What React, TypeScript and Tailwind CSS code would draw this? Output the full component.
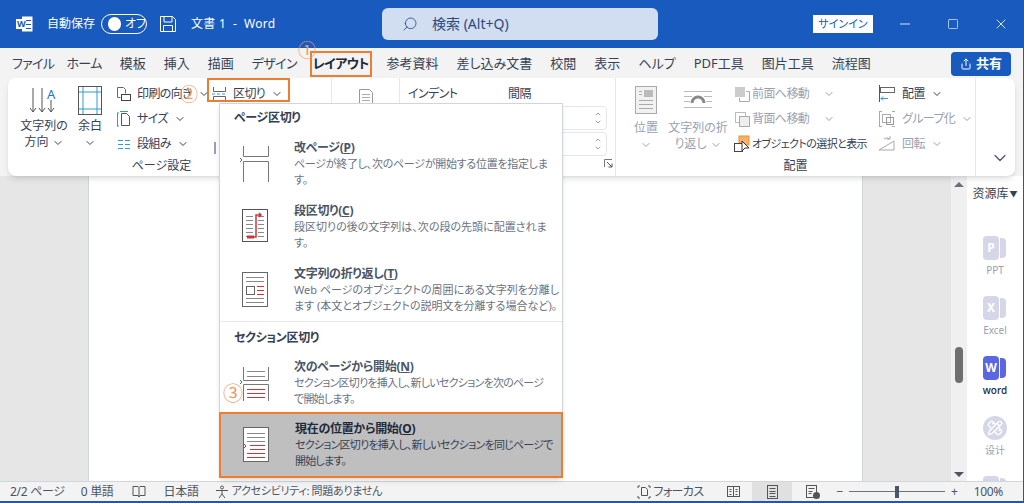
import type { ReactNode } from "react";
import { ChevronDown, Minus, PencilRuler, Search, Share, Square, X } from "lucide-react";

const tabs = [
  { label: "ファイル", cls: "tracking-tighter -mr-1.5" },
  { label: "ホーム", cls: "tracking-tighter" },
  { label: "模板", cls: "" },
  { label: "挿入", cls: "" },
  { label: "描画", cls: "" },
  { label: "デザイン", cls: "tracking-tighter" },
];
const tabsAfter = ["参考資料", "差し込み文書", "校閲", "表示", "ヘルプ", "PDF工具", "图片工具", "流程图"];

function Caret({ className = "" }: { className?: string }) {
  return <ChevronDown className={"inline-block size-3 " + className} strokeWidth={2} />;
}

function Icon({ w, h, children }: { w: number; h: number; children: ReactNode }) {
  return (
    <svg width={w} height={h} viewBox={"0 0 " + w + " " + h} fill="none" className="shrink-0">
      {children}
    </svg>
  );
}

function Lines({ x, y, w, n, gap = 4, color = "#888" }: { x: number; y: number; w: number; n: number; gap?: number; color?: string }) {
  return (
    <>
      {Array.from({ length: n }).map((_, i) => (
        <path key={i} d={"M" + x + " " + (y + i * gap + 0.5) + "h" + w} stroke={color} />
      ))}
    </>
  );
}

function SmallBtn({ icon, label, muted }: { icon: ReactNode; label: string; muted?: boolean }) {
  return (
    <div className={"flex h-6 items-center gap-1.5 text-xs tracking-tighter whitespace-nowrap " + (muted ? "text-gray-400" : "text-gray-700")}>
      {icon}
      <span>{label}</span>
      <Caret />
    </div>
  );
}

function Ribbon() {
  return (
    <div className="z-10 mx-2 flex h-[98px] shrink-0 rounded-lg bg-white text-xs text-gray-700 shadow-md">
      <div className="flex w-81 shrink-0 flex-col border-r border-gray-200 pr-4">
        <div className="flex flex-1">
          <div className="mt-2 ml-3 flex w-12 flex-col items-center">
            <Icon w={28} h={30}>
              <path d="M3 2v24m-3-4 3 4 3-4M12 2v24m-3-4 3 4 3-4M21 14v12m-3-4 3 4 3-4" stroke="#555" />
              <text x="17" y="13" fill="#2e75b6" fontSize="13">A</text>
            </Icon>
            <span className="mt-0.5 text-center leading-4">文字列の<br />方向 <Caret /></span>
          </div>
          <div className="mt-2 ml-1 flex w-9 flex-col items-center">
            <Icon w={24} h={30}>
              <rect x=".5" y=".5" width="23" height="28" stroke="#555" />
              <path d="M5 1v27M19 1v27M1 6h22M1 23h22" stroke="#2e9bd6" />
            </Icon>
            <span className="mt-0.5 text-center leading-4">余白<br /><Caret /></span>
          </div>
          <div className="mt-1 ml-2 flex w-24 flex-col gap-px">
            <SmallBtn label="印刷の向き" icon={<Icon w={15} h={16}><path d="M1.500 1.500h6l2 2v4M1.500 1.500v10h3" stroke="#666" /><rect x="5.500" y="8.500" width="9" height="6" stroke="#444" /></Icon>} />
            <SmallBtn label="サイズ" icon={<Icon w={15} h={16}><path d="M5.500 2.500h5l3 3v9h-8z" stroke="#555" /><path d="M1.500 2v13M1 2h2M1 15h2M4 .5h8" stroke="#2e9bd6" /></Icon>} />
            <SmallBtn label="段組み" icon={<Icon w={15} h={16}><path d="M2 4.500h5M2 8.500h5M2 12.500h5M9 4.500h5M9 8.500h5M9 12.500h5" stroke="#2e9bd6" /></Icon>} />
          </div>
          <div className="mt-1 flex flex-col">
            <SmallBtn label="区切り" icon={<Icon w={15} h={16}><path d="M1.500 1v4.500h12V1M1.500 15v-4.500h12V15" stroke="#666" /><path d="M0 8h15" stroke="#2e9bd6" strokeDasharray="3 2" /></Icon>} />
            <div className="mt-9 ml-0.5 h-3 w-0.5 bg-gray-400" />
          </div>
        </div>
        <div className="pb-0.5 text-center leading-4">ページ設定</div>
      </div>
      <div className="flex w-17 shrink-0 justify-center border-r border-gray-200 pt-2.5">
        <Icon w={20} h={16}>
          <path d="M3.500 15.500v-14h10l3 3v11" stroke="#999" />
          <path d="M6 6.500h8M6 9.500h8M6 12.500h8" stroke="#aaa" />
        </Icon>
      </div>
      <div className="flex w-54 shrink-0 flex-col border-r border-gray-200 pl-2">
        <div className="flex flex-1 flex-col pt-2">
          <div className="flex leading-4 tracking-tighter">
            <span className="w-25">インデント</span>
            <span>間隔</span>
          </div>
          <div className="mt-1 ml-26 flex flex-col gap-0.5 pr-2">
            {[0, 1].map((i) => (
              <div key={i} className="flex h-6 flex-col items-end justify-center rounded-sm border border-gray-200 pr-1 text-gray-500">
                <ChevronDown className="size-2 rotate-180" />
                <ChevronDown className="size-2" />
              </div>
            ))}
          </div>
        </div>
        <div className="flex justify-end pr-0.5 pb-2">
          <Icon w={9} h={9}>
            <path d="M.5 8V.5H8" stroke="#777" />
            <path d="M3 3l5 5M8 4.500V8H4.500" stroke="#555" />
          </Icon>
        </div>
      </div>
      <div className="flex w-90 shrink-0 flex-col border-r border-gray-200">
        <div className="flex flex-1 pt-2">
          <div className="ml-3.5 flex w-8 flex-col items-center text-gray-400">
            <Icon w={22} h={28}>
              <rect x=".5" y=".5" width="21" height="27" fill="#f1f1f1" stroke="#aaa" />
              <rect x="9" y="4" width="9" height="7" fill="#bbb" />
              <path d="M4 5.500h3M4 8.500h3M4 14.500h14M4 18.500h14M4 22.500h14" stroke="#aaa" />
            </Icon>
            <span className="mt-1.5 text-center leading-4">位置<br /><Caret /></span>
          </div>
          <div className="ml-1 flex w-16 flex-col items-center text-gray-400">
            <Icon w={30} h={28}>
              <path d="M1 5.500h28M1 10.500h8M21 10.500h8M1 15.500h6M23 15.500h6M1 21.500h28" stroke="#bbb" />
              <path d="M9 17a6 6 0 0 1 12 0" stroke="#888" strokeWidth="3" />
            </Icon>
            <span className="mt-1.5 text-center leading-4 whitespace-nowrap">文字列の折<br />り返し <Caret /></span>
          </div>
          <div className="-mt-1 ml-1 flex w-36 flex-col gap-px tracking-tighter">
            <div className="flex h-6 items-center gap-0.5 text-gray-400">
              <Icon w={16} h={16}><rect x="1" y="1" width="10" height="10" fill="#ccc" /><path d="M12 5.500h3.500v10h-10V12" stroke="#aaa" /></Icon>
              <span>前面へ移動</span><Caret className="ml-3" />
            </div>
            <div className="flex h-6 items-center gap-0.5 text-gray-400">
              <Icon w={16} h={16}><rect x="1.500" y="1.500" width="10" height="10" stroke="#bbb" /><rect x="5.500" y="5.500" width="10" height="10" fill="#eee" stroke="#aaa" /></Icon>
              <span>背面へ移動</span><Caret className="ml-3" />
            </div>
            <div className="flex h-6 items-center gap-0.5 text-[11px] whitespace-nowrap text-gray-700">
              <Icon w={16} h={18}><rect x="5" y="1" width="10" height="9" fill="#f6b26b" stroke="#e69138" /><rect x=".5" y="8.500" width="8" height="8" fill="#fff" stroke="#444" /><path d="M8 6v10l3-3h4z" fill="#fff" stroke="#333" /></Icon>
              <span>オブジェクトの選択と表示</span>
            </div>
          </div>
          <div className="-mt-1 flex flex-col gap-px">
            <SmallBtn label="配置" icon={<Icon w={18} h={18}><path d="M1.500 0v17" stroke="#555" /><rect x="2.500" y="2.500" width="14" height="5" stroke="#666" /><path d="M3 13.500h7m-7 0 2-2m-2 2 2 2" stroke="#2e9bd6" /></Icon>} />
            <SmallBtn muted label="グループ化" icon={<Icon w={18} h={18}><path d="M1 1.500h3M14 1.500h3M1 16.500h3M14 16.500h3M1.500 1v16" stroke="#aaa" /><rect x="4.500" y="4.500" width="8" height="8" stroke="#aaa" /><rect x="8.500" y="7.500" width="7" height="7" stroke="#999" /></Icon>} />
            <SmallBtn muted label="回転" icon={<Icon w={18} h={18}><path d="M1 15 16 6v9zM6 4a5 5 0 0 1 6 0M12 1v3H9" stroke="#aaa" /></Icon>} />
          </div>
        </div>
        <div className="pb-0.5 text-center leading-4">配置</div>
      </div>
      <div className="flex flex-1 items-end justify-center pb-2 pl-2 text-gray-600">
        <ChevronDown className="size-5" strokeWidth={1.5} />
      </div>
    </div>
  );
}

type MenuEntry = { title: string; key: string; lines: string[]; icon: ReactNode; text?: string };

const pageBreaks: MenuEntry[] = [
  {
    title: "改ページ(",
    key: "P",
    text: "tracking-tight",
    lines: ["ページが終了し、次のページが開始する位置を指定しま", "す。"],
    icon: (
      <Icon w={30} h={36}>
        <path d="M3.500 0v10.500h25V0M3.500 36V15.500h25V36" stroke="#777" />
        <path d="m0 12 2 2-2 2" stroke="#2e75b6" />
      </Icon>
    ),
  },
  {
    title: "段区切り(",
    key: "C",
    lines: ["段区切りの後の文字列は、次の段の先頭に配置されま", "す。"],
    icon: (
      <Icon w={30} h={36}>
        <rect x="2.500" y=".5" width="25" height="32" stroke="#555" />
        <Lines x={6} y={7} w={7} n={6} />
        <Lines x={18} y={7} w={6} n={6} />
        <path d="M13 28h3V6h5m-2-2 2 2-2 2" stroke="#d13438" strokeWidth="1.500" />
        <path d="M7 28h7" stroke="#d13438" strokeWidth="3" />
      </Icon>
    ),
  },
  {
    title: "文字列の折り返し(",
    key: "T",
    lines: ["Web ページのオブジェクトの周囲にある文字列を分離し", "ます (本文とオブジェクトの説明文を分離する場合など)。"],
    icon: (
      <Icon w={30} h={36}>
        <rect x="2.500" y=".5" width="25" height="34" stroke="#666" />
        <Lines x={6} y={5} w={18} n={2} />
        <rect x="6.500" y="14.500" width="8" height="8" stroke="#666" />
        <Lines x={17} y={14} w={7} n={3} color="#d13438" />
        <Lines x={6} y={26} w={18} n={2} />
      </Icon>
    ),
  },
];

function MenuItem({ item, active, className = "h-[63px] text-gray-500" }: { item: MenuEntry; active?: boolean; className?: string }) {
  return (
    <div className={"flex items-center gap-6 pl-5 text-[11px] leading-4 whitespace-nowrap " + className}>
      {item.icon}
      <div>
        <div className={"text-xs font-bold tracking-tight " + (active ? "text-gray-800" : "text-gray-600")}>
          {item.title}<u>{item.key}</u>)
        </div>
        {item.lines.map((l) => (
          <div key={l} className={item.text}>{l}</div>
        ))}
      </div>
    </div>
  );
}

function BreakMenu() {
  return (
    <div className="absolute top-[103px] left-[219px] z-20 w-86 border border-gray-300 bg-white text-xs shadow-md">
      <div className="flex h-7 items-center px-3.5 font-bold tracking-tight text-gray-700">ページ区切り</div>
      {pageBreaks.map((item) => (
        <MenuItem key={item.key} item={item} />
      ))}
      <div className="flex h-8 items-center border-t border-gray-200 px-3.5 font-bold tracking-tight text-gray-700">セクション区切り</div>
      <MenuItem
        className="-mt-0.5 h-[63px] text-gray-500"
        item={{
          title: "次のページから開始(",
          key: "N",
          text: "tracking-[-0.07em]",
          lines: ["セクション区切りを挿入し、新しいセクションを次のページ", "で開始します。"],
          icon: (
            <Icon w={30} h={36}>
              <path d="M3.500 2v13.500h25V2" stroke="#777" />
              <Lines x={7} y={6} w={18} n={2} gap={5} />
              <path d="M3.500 36V19.500h25V36" stroke="#777" />
              <Lines x={7} y={24} w={18} n={3} gap={4} color="#d13438" />
              <path d="m0 15 2 2-2 2" stroke="#2e75b6" />
            </Icon>
          ),
        }}
      />
      <MenuItem
        active
        className="-mx-px -mt-0.5 -mb-px h-[66px] border-2 border-[#ed7d31] bg-[#bfbfbf] text-gray-700"
        item={{
          title: "現在の位置から開始(",
          key: "O",
          text: "tracking-[-0.07em]",
          lines: ["セクション区切りを挿入し、新しいセクションを同じページで", "開始します。"],
          icon: (
            <Icon w={30} h={36}>
              <rect x="2.500" y=".5" width="25" height="34" fill="#fff" stroke="#666" />
              <Lines x={6} y={6} w={18} n={3} />
              <path d="m3 17 2 2-2 2" stroke="#d13438" />
              <Lines x={9} y={18} w={15} n={2} color="#d13438" />
              <Lines x={6} y={26} w={18} n={2} color="#d13438" />
            </Icon>
          ),
        }}
      />
    </div>
  );
}

function AppTile({ label, color, text, active, round }: { label: string; color: string; text: string; active?: boolean; round?: boolean }) {
  return (
    <div className="flex h-15 shrink-0 flex-col items-center gap-1">
      {round ? (
        <div className={"flex size-6 items-center justify-center rounded-full text-white " + color}>
          <PencilRuler className="size-4" />
        </div>
      ) : (
        <div className="flex h-6 w-6">
          <div className={"flex h-6 w-4 items-center justify-center rounded-sm text-xs font-bold text-white " + color}>{text}</div>
          <div className={"ml-px h-5 w-1.5 self-center rounded-r-sm " + color} />
        </div>
      )}
      <span className={"text-[10px] leading-3 " + (active ? "font-medium text-gray-800" : "text-gray-400")}>{label}</span>
    </div>
  );
}

export default function App() {
  return (
    <div className="relative flex h-screen flex-col overflow-hidden border-r border-b-2 border-[#2b579a] bg-[#f3f3f3] font-['Noto_Sans','Noto_Sans_CJK_JP',sans-serif] [font-feature-settings:'palt']">
      {/* title bar */}
      <div className="flex h-12 shrink-0 items-center bg-[#185abd] text-white">
        <div className="-mr-0.5 flex w-96 items-center pl-4 text-xs whitespace-nowrap">
          <Icon w={17} h={16}>
            <rect x="6" y=".5" width="10.500" height="15" fill="#fff" />
            <path d="M9 4.500h6M9 8.500h6M9 12.500h6" stroke="#185abd" />
            <rect x="0" y="3" width="10" height="10" fill="#fff" />
            <text x="1" y="11" fontSize="9" fontWeight="700" fill="#185abd">W</text>
          </Icon>
          <span className="ml-3.5">自動保存</span>
          <div className="mr-3 ml-1.5 flex h-5 w-11.5 items-center rounded-full border border-white pl-1.5">
            <span className="size-3.5 rounded-full bg-white" />
            <span className="ml-1">オフ</span>
          </div>
          <Icon w={18} h={18}>
            <path d="M1.500 1.500h12l3 3v12h-15zM5 1.500V7h8V1.500M4.500 16.500V10.500h9v6" stroke="#fff" />
          </Icon>
          <span className="ml-3.5 tracking-wide">文書 1&nbsp; -&nbsp; Word</span>
        </div>
        <div className="flex h-8 w-[276px] items-center gap-3.5 rounded-md bg-[#d1ddf0] pl-5 text-sm text-[#2b4a7f]">
          <Search className="size-4 -scale-x-100" strokeWidth={1.25} />
          <span>検索 (Alt+Q)</span>
        </div>
        <div className="-mr-0.5 ml-auto flex items-center">
          <div className="mr-2 flex h-4.5 w-15 items-center justify-center bg-white text-[11px] text-[#185abd]">サインイン</div>
          <div className="flex w-12 justify-center"><Minus className="size-4" strokeWidth={1.25} /></div>
          <div className="flex w-12 justify-center"><Square className="size-3" strokeWidth={1.25} /></div>
          <div className="flex w-12 justify-center"><X className="size-4" strokeWidth={1.25} /></div>
        </div>
      </div>

      {/* tabs */}
      <div className="-mb-0.5 flex h-8 shrink-0 items-center gap-4.5 pl-3 text-[13px] whitespace-nowrap text-gray-700">
        {tabs.map((t) => (
          <span key={t.label} className={t.cls}>{t.label}</span>
        ))}
        <span className="-ml-0.5 flex h-5 items-center font-bold tracking-tighter text-gray-800 outline-2 outline-offset-1 outline-[#ed7d31]">レイアウト</span>
        {tabsAfter.map((t) => (
          <span key={t}>{t}</span>
        ))}
        <div className="mr-3 ml-auto flex h-6 w-15 items-center justify-center gap-1 rounded-sm bg-[#185abd] font-bold text-white">
          <Share className="size-3" />
          <span>共有</span>
        </div>
      </div>

      <Ribbon />

      {/* document area */}
      <div className="flex min-h-0 flex-1">
        <div className="flex flex-1 bg-[#e6e6e6] px-22">
          <div className="flex-1 border-x border-gray-300 bg-white" />
        </div>
        <div className="flex w-4 flex-col items-center bg-[#f0f0f0] pt-1.5 pb-1 text-gray-500">
          <div className="border-x-[5px] border-b-[5px] border-x-transparent border-b-gray-500" />
          <div className="mt-40 h-9 w-2 rounded-full bg-[#6f6f6f]" />
          <div className="mt-auto border-x-[5px] border-t-[5px] border-x-transparent border-t-gray-600" />
        </div>
        <div className="flex w-14 flex-col items-center overflow-hidden bg-white">
          <div className="flex h-9 shrink-0 items-center text-xs whitespace-nowrap text-gray-700">资源库<span className="ml-px text-[8px]">▼</span></div>
          <div className="mt-6 flex shrink-0 flex-col items-center">
            <AppTile label="PPT" color="bg-[#d5d7e8]" text="P" />
            <AppTile label="Excel" color="bg-[#d5d7e8]" text="X" />
            <AppTile label="word" color="bg-[#5b67e0]" text="W" active />
            <AppTile label="设计" color="bg-[#d5d7e8]" text="" round />
            <AppTile label="" color="bg-[#d5d7e8]" text="" />
          </div>
        </div>
      </div>

      {/* status bar */}
      <div className="z-10 flex h-5 shrink-0 items-center border-t border-gray-300 bg-[#f3f3f3] text-xs tracking-tight whitespace-nowrap text-gray-600">
        <span className="ml-2.5">2/2 ページ</span>
        <span className="ml-4">0 単語</span>
        <span className="ml-4.5">
          <Icon w={14} h={13}><path d="M1 1.500h5l1 1 1-1h5v9H8l-1 1.500L6 10.500H1zM7 2.500v9" stroke="#555" /></Icon>
        </span>
        <span className="ml-4.5">日本語</span>
        <span className="ml-4 flex items-center gap-0.5 text-[11px]">
          <Icon w={15} h={14}><circle cx="7" cy="2.500" r="1.500" stroke="#555" /><path d="M1 5.500h12M7 5v4l-3 4M7 9l3 4" stroke="#555" /></Icon>
          アクセシビリティ: 問題ありません
        </span>
        <div className="ml-auto flex h-full items-center">
          <Icon w={14} h={14}><path d="M1 3V1h2M11 1h2v2M1 11v2h2M11 13h2v-2" stroke="#555" /><path d="M4.500 2.500h4l2 2v6h-6z" stroke="#555" /></Icon>
          <span className="ml-0.5 tracking-tighter">フォーカス</span>
          <span className="ml-6">
            <Icon w={13} h={13}><rect x=".5" y="1.500" width="12" height="10" stroke="#555" /><path d="M6.500 2v9M2.500 4.500h2M2.500 6.500h2M2.500 9.500h2M8.500 4.500h2M8.500 6.500h2M8.500 9.500h2" stroke="#555" /></Icon>
          </span>
          <div className="ml-3 flex h-full w-10 items-center justify-center bg-[#e0e0e0]">
            <Icon w={11} h={14}><rect x=".5" y=".5" width="10" height="13" stroke="#555" /><path d="M2.500 3.500h6M2.500 6.500h6M2.500 8.500h6M2.500 11.500h6" stroke="#555" /></Icon>
          </div>
          <span className="ml-3.5">
            <Icon w={14} h={14}><rect x=".5" y=".5" width="10" height="12" stroke="#555" /><path d="M2.500 3.500h6M2.500 6.500h4M2.500 8.500h3" stroke="#555" /><circle cx="10.500" cy="10.500" r="3.500" fill="#555" /></Icon>
          </span>
          <span className="ml-4">−</span>
          <div className="relative mx-1.5 flex h-3 w-24 items-center">
            <div className="h-px w-full bg-gray-500" />
            <div className="absolute left-11.5 h-3 w-1 bg-gray-600" />
          </div>
          <span>+</span>
          <span className="mr-5 ml-4">100%</span>
        </div>
      </div>

      <BreakMenu />

      {/* annotations */}
      <div className="absolute top-[78px] left-[207px] z-30 h-6 w-[83px] border-2 border-[#ed7d31]" />
      <span className="absolute top-[38px] left-[298px] z-30 text-lg leading-6 text-[#ed9b5f]">①</span>
      <span className="absolute top-[82px] left-[180px] z-30 text-lg leading-6 text-[#ed9b5f]">②</span>
      <span className="absolute top-[382px] left-[223px] z-30 text-xl leading-6 text-[#ed9b5f]">③</span>
    </div>
  );
}
